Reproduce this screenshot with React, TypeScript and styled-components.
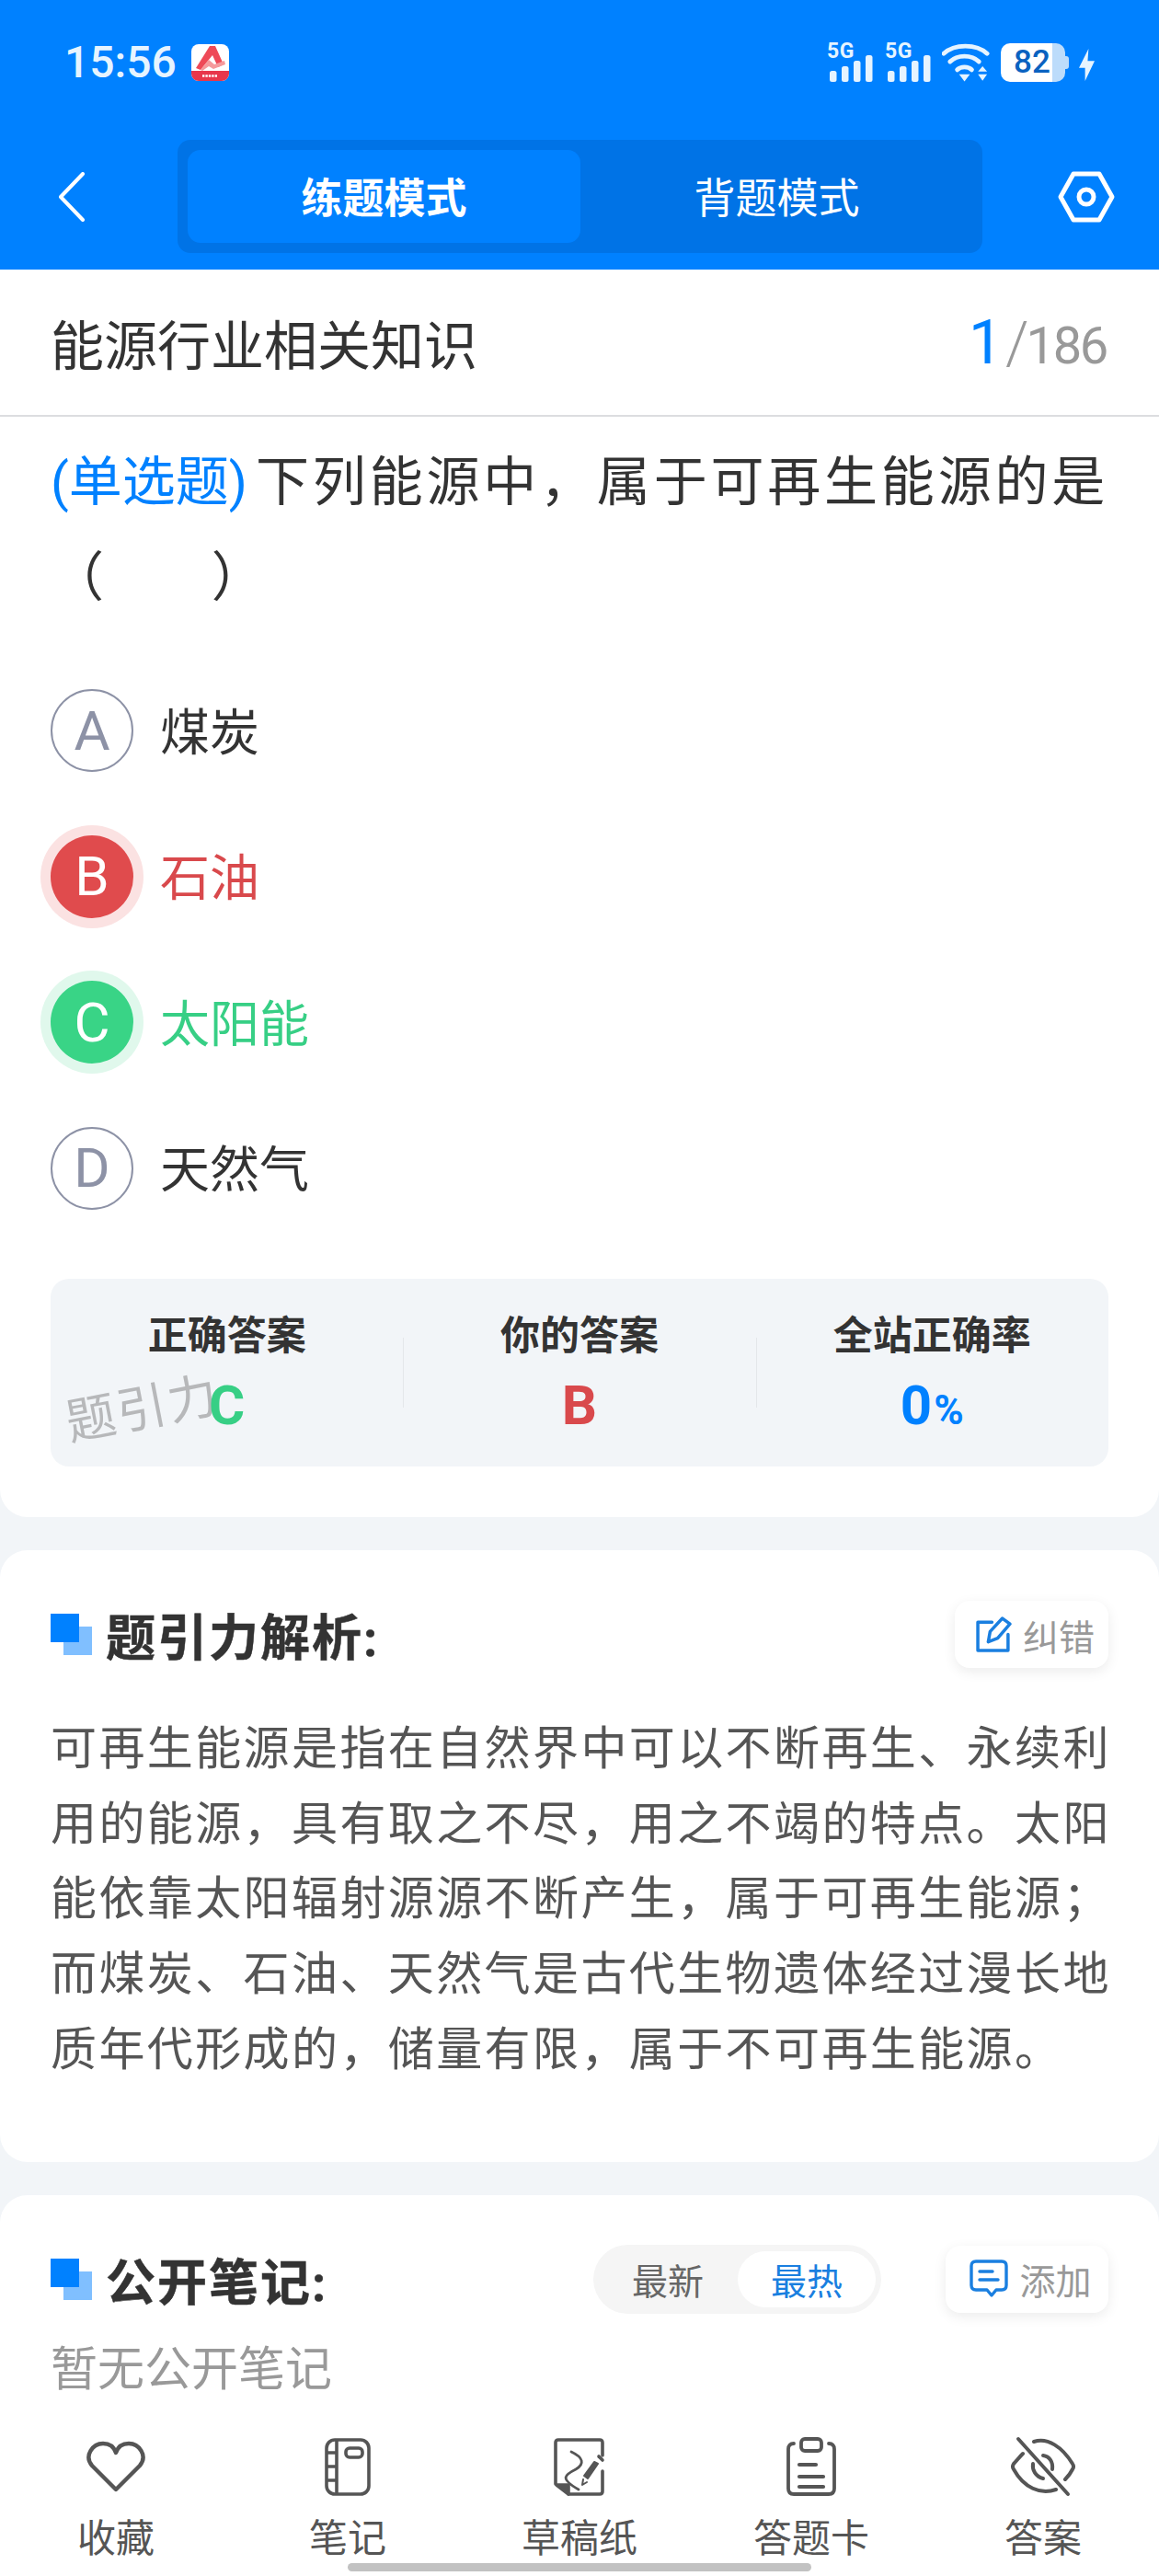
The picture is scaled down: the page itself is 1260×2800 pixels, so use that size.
import React from "react";
import styled, { createGlobalStyle } from "styled-components";

const GlobalStyle = createGlobalStyle`
  html, body {
    margin: 0;
    padding: 0;
    background: #f2f5f8;
  }
  * {
    box-sizing: border-box;
  }
`;

const BLUE = "#0081ff";
const ICON_BLUE = "#1a7fe0";

const options = [
  { key: "A", label: "煤炭", state: "idle" },
  { key: "B", label: "石油", state: "wrong" },
  { key: "C", label: "太阳能", state: "right" },
  { key: "D", label: "天然气", state: "idle" },
] as const;

type OptionState = "idle" | "wrong" | "right";

const stateColor = { idle: "#333333", wrong: "#d9494c", right: "#37cf85" };
const circleColor = { idle: "#ffffff", wrong: "#e04b4d", right: "#39d486" };
const haloColor = { idle: "transparent", wrong: "#fbe2e2", right: "#e0f8ec" };

const BackIcon = () => (
  <svg width="30" height="54" viewBox="0 0 30 54" fill="none">
    <path d="M27 2 L3 27 L27 52" stroke="#fff" strokeWidth="4" strokeLinecap="round" strokeLinejoin="round" />
  </svg>
);

const SettingIcon = () => (
  <svg width="62" height="56" viewBox="0 0 62 56" fill="none">
    <path d="M17 3 H45 L59 28 L45 53 H17 L3 28 Z" stroke="#fff" strokeWidth="5" strokeLinejoin="round" />
    <circle cx="31" cy="28" r="8" stroke="#fff" strokeWidth="5" />
  </svg>
);

const LogoIcon = () => (
  <svg width="41" height="40" viewBox="0 0 41 40">
    <rect width="41" height="40" rx="8" fill="#fff" />
    <path d="M0 29 H41 V32 a8 8 0 0 1 -8 8 H8 a8 8 0 0 1 -8 -8 Z" fill="#e8364b" />
    <path d="M20 2 L26 2 L35 22 L29 25 L23 12 L10 28 L5 26 Z" fill="#ee4a58" />
    <path d="M10 28 L19 17 L25 22 L36 18 L37 22 L24 27 L19 24 L12 29 Z" fill="#f59a9c" />
    <path d="M12 34.5 H29" stroke="#fff" strokeWidth="2.4" strokeDasharray="2.4 1" />
  </svg>
);

const SignalBars = () => (
  <svg width="49" height="29" viewBox="0 0 49 29" fill="#e6f4ff">
    <rect x="1" y="17" width="7.5" height="12" rx="2.5" />
    <rect x="14" y="12" width="7.5" height="17" rx="2.5" />
    <rect x="27" y="6" width="7.5" height="23" rx="2.5" />
    <rect x="40" y="0" width="7.5" height="29" rx="2.5" />
  </svg>
);

const WifiIcon = () => (
  <svg width="53" height="42" viewBox="0 0 54 42" fill="none">
    <path d="M2 11 C14 0 38 0 50 11" stroke="#e6f4ff" strokeWidth="5" strokeLinecap="round" />
    <path d="M9 20 C17 12 33 12 41 20" stroke="#e6f4ff" strokeWidth="5" strokeLinecap="round" />
    <path d="M17 29 C21 25 29 25 33 29" stroke="#e6f4ff" strokeWidth="5" strokeLinecap="round" />
    <path d="M19 34 H31 L25 42 Z" fill="#e6f4ff" />
    <path d="M45 25 L50 31 H40 Z M40 34 H50 L45 41 Z" fill="#e6f4ff" />
  </svg>
);

const BoltIcon = () => (
  <svg width="17" height="37" viewBox="0 0 18 37" fill="#e6f4ff">
    <path d="M11 0 L0 22 H7 L7 37 L18 14 H10 Z" />
  </svg>
);

const EditIcon = () => (
  <svg width="39" height="39" viewBox="0 0 38 38" fill="none" stroke={ICON_BLUE} strokeWidth="3.4" strokeLinejoin="round" strokeLinecap="round">
    <path d="M17 6 H2 V36 H34 V19" />
    <path d="M28 2 L36 8 L23 23 L13 27 L15 16 Z" />
  </svg>
);

const CommentIcon = () => (
  <svg width="42" height="42" viewBox="0 0 42 42" fill="none" stroke={ICON_BLUE} strokeWidth="3.4" strokeLinecap="round" strokeLinejoin="round">
    <path d="M7 2 H35 Q40 2 40 7 V28 Q40 33 35 33 H29 L24 39 L19 33 H7 Q2 33 2 28 V7 Q2 2 7 2 Z" />
    <path d="M11 13 H25" />
    <path d="M11 22 H31" />
  </svg>
);

const HeartIcon = () => (
  <svg width="64" height="56" viewBox="0 0 64 56" fill="none" stroke="#555" strokeWidth="4.4" strokeLinejoin="round">
    <path d="M32 53 L6 27 C-3 16 7 3 18 3 C25 3 30 7 32 13 C34 7 39 3 46 3 C57 3 67 16 58 27 Z" />
  </svg>
);

const NotebookIcon = () => (
  <svg width="50" height="63" viewBox="0 0 50 63" fill="none" stroke="#555" strokeWidth="3.6">
    <rect x="2" y="2" width="46" height="59" rx="9" />
    <path d="M13 2 V61" />
    <path d="M2 16 H13 M2 31 H13 M2 46 H13" />
    <rect x="23" y="11" width="18" height="10" rx="4" />
  </svg>
);

const DraftIcon = () => (
  <svg width="56" height="63" viewBox="0 0 56 63" fill="none" stroke="#555" strokeWidth="3.6" strokeLinecap="round" strokeLinejoin="round">
    <path d="M53 19 V5 Q53 2 50 2 H5 Q2 2 2 5 V50" />
    <path d="M53 36 V58 Q53 61 50 61 H16" />
    <path d="M3 51 L16 61 V51 Z" fill="#555" />
    <path d="M19 15 C32 21 34 28 24 34 C12 40 6 44 27 56" strokeWidth="2.8" />
    <path d="M48 28 L37 44 L33 41 L44 26 Z" fill="#555" strokeWidth="2" />
    <path d="M32 45 L31 51 L36 48" strokeWidth="2" />
    <path d="M49 20 L53 24" />
  </svg>
);

const ClipboardIcon = () => (
  <svg width="54" height="64" viewBox="0 0 54 64" fill="none" stroke="#555" strokeWidth="3.8" strokeLinecap="round" strokeLinejoin="round">
    <path d="M8 7 Q2 7 2 13 V56 Q2 62 8 62 H46 Q52 62 52 56 V13 Q52 7 46 7" />
    <rect x="16" y="2" width="22" height="13" rx="4" />
    <path d="M14 30 H32" strokeWidth="4.2" />
    <path d="M14 43 H40" strokeWidth="4.2" />
    <path d="M14 54 H40" strokeWidth="4.2" />
  </svg>
);

const EyeOffIcon = () => (
  <svg width="70" height="66" viewBox="0 0 70 66" fill="none" stroke="#555" strokeWidth="4" strokeLinecap="round" strokeLinejoin="round">
    <path d="M8 3 L62 63" />
    <path d="M25 6 C40 1 56 12 67 30 Q69 33 67 36 C65 40 62 44 59 47" />
    <path d="M13 19 C9 23 6 27 3 30 Q1 33 3 36 C14 56 32 64 49 58" />
    <path d="M35 21 C42 22 46 28 45 36" />
    <path d="M24 30 C23 37 27 44 35 46" />
  </svg>
);

const App = () => {
  return (
    <Page>
      <GlobalStyle />
      <Header>
        <StatusBar>
          <StatusLeft>
            <Clock>15:56</Clock>
            <LogoIcon />
          </StatusLeft>
          <StatusRight>
            <Signal>
              <SignalLabel>5G</SignalLabel>
              <SignalBars />
            </Signal>
            <Signal>
              <SignalLabel>5G</SignalLabel>
              <SignalBars />
            </Signal>
            <WifiIcon />
            <Battery>
              <BatteryLevel>82</BatteryLevel>
            </Battery>
            <BoltIcon />
          </StatusRight>
        </StatusBar>
        <NavBar>
          <BackSlot>
            <BackIcon />
          </BackSlot>
          <ModeTabs>
            <ModeTab $active>练题模式</ModeTab>
            <ModeTab>背题模式</ModeTab>
          </ModeTabs>
          <SettingSlot>
            <SettingIcon />
          </SettingSlot>
        </NavBar>
      </Header>

      <Main>
        <QuestionCard>
          <TitleRow>
            <ChapterTitle>能源行业相关知识</ChapterTitle>
            <Progress>
              <ProgressCurrent>1</ProgressCurrent>
              <ProgressSlash>/</ProgressSlash>
              <ProgressTotal>186</ProgressTotal>
            </Progress>
          </TitleRow>
          <QuestionBody>
            <QuestionText>
              <QuestionType>(单选题)</QuestionType>下列能源中，属于可再生能源的是（<Blank />）
            </QuestionText>
            <OptionList>
              {options.map((option) => (
                <OptionRow key={option.key}>
                  <OptionCircle $state={option.state}>{option.key}</OptionCircle>
                  <OptionLabel $state={option.state}>{option.label}</OptionLabel>
                </OptionRow>
              ))}
            </OptionList>
            <StatBox>
              <Watermark>题引力</Watermark>
              <StatCol>
                <StatTitle>正确答案</StatTitle>
                <StatValue $color="#37cf85">C</StatValue>
              </StatCol>
              <StatCol $divided>
                <StatTitle>你的答案</StatTitle>
                <StatValue $color="#d9494c">B</StatValue>
              </StatCol>
              <StatCol $divided>
                <StatTitle>全站正确率</StatTitle>
                <StatValue $color={BLUE}>
                  0<StatUnit>%</StatUnit>
                </StatValue>
              </StatCol>
            </StatBox>
          </QuestionBody>
        </QuestionCard>

        <SectionCard $bottom={80}>
          <SectionHead>
            <SectionTitle>
              <TitleMark />
              题引力解析:
            </SectionTitle>
            <ActionButton $width={167}>
              <EditIcon />
              纠错
            </ActionButton>
          </SectionHead>
          <Analysis>
            可再生能源是指在自然界中可以不断再生、永续利用的能源，具有取之不尽，用之不竭的特点。太阳能依靠太阳辐射源源不断产生，属于可再生能源；而煤炭、石油、天然气是古代生物遗体经过漫长地质年代形成的，储量有限，属于不可再生能源。
          </Analysis>
        </SectionCard>

        <SectionCard $bottom={200}>
          <SectionHead>
            <SectionTitle>
              <TitleMark />
              公开笔记:
            </SectionTitle>
            <HeadActions>
              <SortToggle>
                <SortItem>最新</SortItem>
                <SortItem $active>最热</SortItem>
              </SortToggle>
              <ActionButton $width={177}>
                <CommentIcon />
                添加
              </ActionButton>
            </HeadActions>
          </SectionHead>
          <EmptyText>暂无公开笔记</EmptyText>
        </SectionCard>
      </Main>

      <BottomNav>
        <NavItem>
          <NavIcon>
            <HeartIcon />
          </NavIcon>
          收藏
        </NavItem>
        <NavItem>
          <NavIcon>
            <NotebookIcon />
          </NavIcon>
          笔记
        </NavItem>
        <NavItem>
          <NavIcon>
            <DraftIcon />
          </NavIcon>
          草稿纸
        </NavItem>
        <NavItem>
          <NavIcon>
            <ClipboardIcon />
          </NavIcon>
          答题卡
        </NavItem>
        <NavItem>
          <NavIcon>
            <EyeOffIcon />
          </NavIcon>
          答案
        </NavItem>
        <HomeBar />
      </BottomNav>
    </Page>
  );
};

const Page = styled.div`
  position: relative;
  width: 1260px;
  height: 2800px;
  display: flex;
  flex-direction: column;
  overflow: hidden;
  background: #f2f5f8;
  font-family: Roboto, "Noto Sans CJK SC", sans-serif;
  color: #333;
`;

const Header = styled.header`
  flex: none;
  height: 293px;
  background: ${BLUE};
  display: flex;
  flex-direction: column;
`;

const StatusBar = styled.div`
  height: 136px;
  padding: 47px 70px 0;
  display: flex;
  justify-content: space-between;
  align-items: flex-start;
`;

const StatusLeft = styled.div`
  display: flex;
  align-items: center;
  gap: 18px;
`;

const Clock = styled.span`
  width: 120px;
  font-size: 48px;
  line-height: 42px;
  font-weight: 500;
  color: #e6f4ff;
`;

const StatusRight = styled.div`
  display: flex;
  align-items: flex-end;
  height: 42px;
  gap: 11px;
`;

const Signal = styled.div`
  position: relative;
  width: 49px;
  height: 42px;
  display: flex;
  align-items: flex-end;

  & + & {
    margin-left: 3px;
  }
`;

const SignalLabel = styled.span`
  position: absolute;
  left: -2px;
  top: -2px;
  font-size: 23px;
  line-height: 22px;
  font-weight: 700;
  letter-spacing: 0.5px;
  color: #e6f4ff;
`;

const Battery = styled.div`
  position: relative;
  width: 70px;
  height: 42px;
  margin-right: 4px;
  border-radius: 10px;
  background: linear-gradient(90deg, #ffffff 0 80%, #bcdcfb 80% 100%);
  display: flex;
  align-items: center;
  justify-content: center;

  &::after {
    content: "";
    position: absolute;
    right: -4px;
    top: 14px;
    width: 4px;
    height: 14px;
    border-radius: 0 3px 3px 0;
    background: #bcdcfb;
  }
`;

const BatteryLevel = styled.span`
  font-size: 35px;
  font-weight: 500;
  line-height: 42px;
  color: #0a62c0;
  margin-right: 2px;
`;

const NavBar = styled.div`
  height: 123px;
  margin-top: 16px;
  display: grid;
  grid-template-columns: 193px 875px 1fr;
  align-items: center;
`;

const BackSlot = styled.div`
  padding-left: 63px;
  display: flex;
  align-items: center;
`;

const ModeTabs = styled.div`
  height: 123px;
  padding: 11px;
  border-radius: 14px;
  background: #0073e6;
  display: flex;
`;

const ModeTab = styled.div<{ $active?: boolean }>`
  flex: 0 0 427px;
  padding-bottom: 2px;
  border-radius: 14px;
  background: ${(p) => (p.$active ? BLUE : "transparent")};
  color: #fff;
  font-size: 45px;
  font-weight: ${(p) => (p.$active ? 700 : 400)};
  display: flex;
  align-items: center;
  justify-content: center;
`;

const SettingSlot = styled.div`
  padding-right: 48px;
  display: flex;
  justify-content: flex-end;
`;

const Main = styled.main`
  flex: 1;
  min-height: 0;
  overflow: hidden;
  display: flex;
  flex-direction: column;
  gap: 36px;
`;

const QuestionCard = styled.section`
  flex: none;
  background: #fff;
  border-radius: 0 0 30px 30px;
`;

const TitleRow = styled.div`
  height: 160px;
  padding: 0 55px;
  border-bottom: 2px solid #dcdde0;
  display: flex;
  justify-content: space-between;
  align-items: center;
`;

const ChapterTitle = styled.h1`
  margin: 0;
  font-size: 58px;
  font-weight: 400;
  color: #333;
`;

const Progress = styled.div`
  color: #999;
  display: flex;
  align-items: baseline;
`;

const ProgressCurrent = styled.span`
  font-size: 66px;
  color: ${BLUE};
`;

const ProgressSlash = styled.span`
  margin: 0 -3px 0 3px;
  font-size: 64px;
  font-weight: 300;
`;

const ProgressTotal = styled.span`
  font-size: 56px;
  letter-spacing: -2.3px;
  margin-right: 2px;
`;

const QuestionBody = styled.div`
  padding: 19px 55px 55px;
`;

const QuestionText = styled.p`
  margin: 0 -8px 0 0;
  font-size: 58px;
  line-height: 104px;
  letter-spacing: 3.8px;
  color: #333;
`;

const QuestionType = styled.span`
  color: ${BLUE};
  letter-spacing: 0;
  margin-right: 9px;
`;

const Blank = styled.span`
  display: inline-block;
  width: 113px;
`;

const OptionList = styled.div`
  margin-top: 35px;
`;

const OptionRow = styled.div`
  height: 158.5px;
  display: flex;
  align-items: center;
  gap: 30px;
`;

const OptionCircle = styled.div<{ $state: OptionState }>`
  flex: none;
  width: 90px;
  height: 90px;
  border-radius: 50%;
  background: ${(p) => circleColor[p.$state]};
  border: ${(p) => (p.$state === "idle" ? "2px solid #8d92a6" : "none")};
  box-shadow: 0 0 0 11px ${(p) => haloColor[p.$state]};
  color: ${(p) => (p.$state === "idle" ? "#8d92a6" : "#fff")};
  font-size: 60px;
  font-weight: 400;
  display: flex;
  align-items: center;
  justify-content: center;
`;

const OptionLabel = styled.span<{ $state: OptionState }>`
  margin: -4px 0 0 -1px;
  font-size: 54px;
  color: ${(p) => stateColor[p.$state]};
`;

const StatBox = styled.div`
  position: relative;
  margin-top: 41px;
  height: 204px;
  border-radius: 20px;
  background: #f2f5f8;
  display: grid;
  grid-template-columns: repeat(3, 1fr);
`;

const Watermark = styled.span`
  position: absolute;
  left: 16px;
  top: 112px;
  font-size: 54px;
  letter-spacing: 2px;
  line-height: 60px;
  color: rgba(110, 110, 110, 0.45);
  transform: rotate(-11deg);
`;

const StatCol = styled.div<{ $divided?: boolean }>`
  position: relative;
  padding-top: 33px;
  display: flex;
  flex-direction: column;
  align-items: center;

  &::before {
    content: "";
    display: ${(p) => (p.$divided ? "block" : "none")};
    position: absolute;
    left: 0;
    top: 64px;
    height: 76px;
    border-left: 1px solid #e4e7ea;
  }
`;

const StatTitle = styled.div`
  font-size: 43px;
  line-height: 58px;
  font-weight: 700;
  color: #333;
`;

const StatValue = styled.div<{ $color: string }>`
  margin-top: 17px;
  font-size: 60px;
  line-height: 60px;
  font-weight: 700;
  color: ${(p) => p.$color};
`;

const StatUnit = styled.span`
  font-size: 44px;
  margin-left: 2px;
`;

const SectionCard = styled.section<{ $bottom: number }>`
  flex: none;
  background: #fff;
  border-radius: 30px;
  padding: 55px 55px ${(p) => p.$bottom}px;
`;

const SectionHead = styled.div`
  height: 73px;
  display: flex;
  justify-content: space-between;
  align-items: center;
`;

const SectionTitle = styled.h2`
  margin: 0;
  font-size: 54px;
  font-weight: 700;
  letter-spacing: 2px;
  -webkit-text-stroke: 0.5px #333;
  color: #333;
  display: flex;
  align-items: center;
  gap: 15px;
`;

const TitleMark = styled.i`
  position: relative;
  display: block;
  width: 45px;
  height: 45px;

  &::before,
  &::after {
    content: "";
    position: absolute;
    width: 31px;
    height: 31px;
  }
  &::after {
    left: 14px;
    top: 14px;
    background: #80bfff;
  }
  &::before {
    left: 0;
    top: 0;
    background: ${BLUE};
    z-index: 1;
  }
`;

const HeadActions = styled.div`
  display: flex;
  align-items: center;
  gap: 70px;
`;

const ActionButton = styled.div<{ $width: number }>`
  width: ${(p) => p.$width}px;
  height: 73px;
  padding-left: 8px;
  border-radius: 16px;
  background: #fff;
  box-shadow: 0 4px 14px rgba(0, 0, 0, 0.08);
  color: #999;
  font-size: 39px;
  display: flex;
  align-items: center;
  justify-content: center;
  gap: 12px;
`;

const SortToggle = styled.div`
  width: 313px;
  height: 75px;
  padding: 7px 6px;
  border-radius: 38px;
  background: #f5f5f5;
  display: flex;
  justify-content: space-between;
`;

const SortItem = styled.div<{ $active?: boolean }>`
  width: 150px;
  border-radius: 31px;
  background: ${(p) => (p.$active ? "#fff" : "transparent")};
  color: ${(p) => (p.$active ? ICON_BLUE : "#666")};
  font-size: 39px;
  display: flex;
  align-items: center;
  justify-content: center;
`;

const Analysis = styled.p`
  margin: 48px -8px 0 0;
  font-size: 50px;
  line-height: 81.7px;
  letter-spacing: 2.4px;
  color: #555;
`;

const EmptyText = styled.div`
  margin-top: 32px;
  font-size: 51px;
  line-height: 60px;
  color: #999;
`;

const BottomNav = styled.nav`
  position: relative;
  flex: none;
  height: 170px;
  background: #fff;
  display: grid;
  grid-template-columns: repeat(5, 1fr);
`;

const NavItem = styled.div`
  padding-top: 18px;
  display: flex;
  flex-direction: column;
  align-items: center;
  font-size: 42px;
  line-height: 56px;
  color: #555;
`;

const NavIcon = styled.div`
  height: 66px;
  margin-bottom: 18px;
  display: flex;
  align-items: center;
  justify-content: center;
`;

const HomeBar = styled.div`
  position: absolute;
  left: 378px;
  bottom: 5px;
  width: 504px;
  height: 9px;
  border-radius: 5px;
  background: #c2c2c2;
`;

export default App;
